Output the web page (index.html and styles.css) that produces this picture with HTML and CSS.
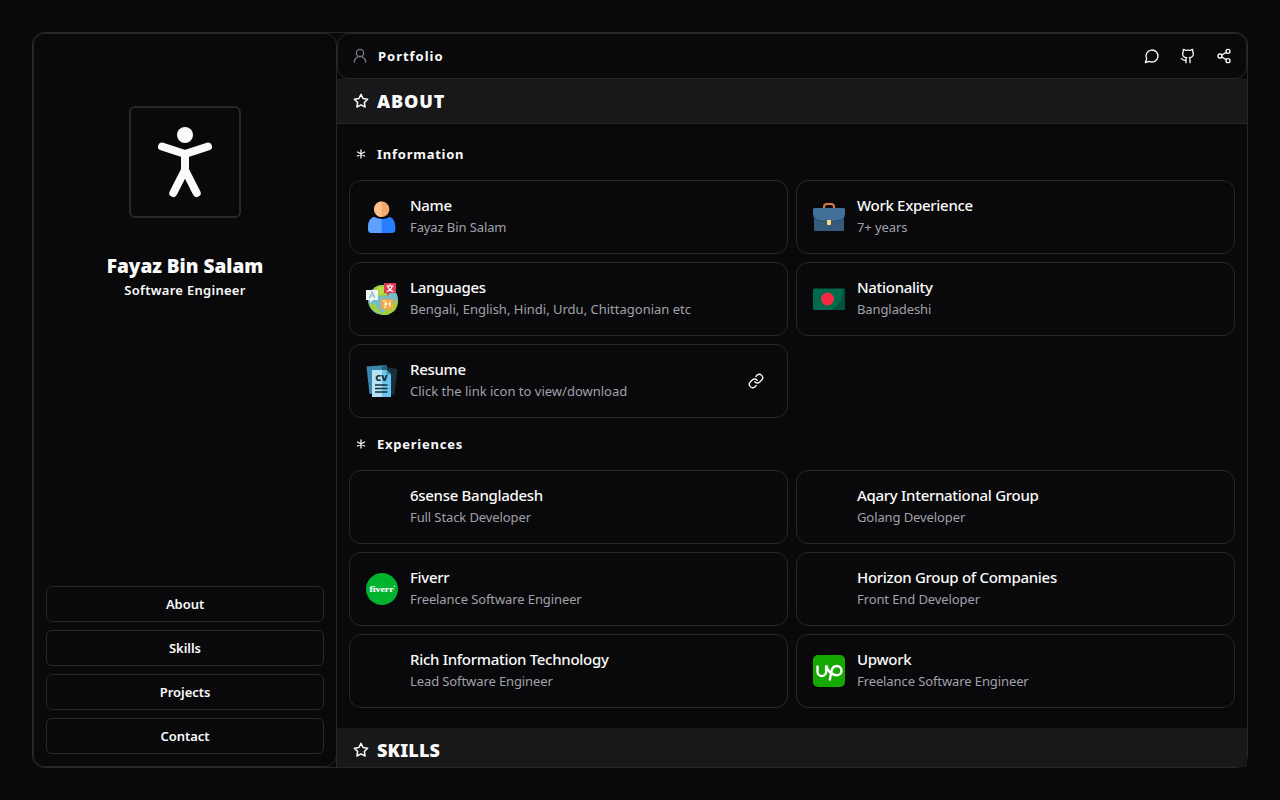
FILE: index.html
```html
<!DOCTYPE html>
<html lang="en">
<head>
<meta charset="utf-8">
<title>Portfolio</title>
<link rel="stylesheet" href="styles.css">
</head>
<body>
<div class="shell">
  <aside class="sidebar">
    <div class="profile">
      <div class="avatar">
        <svg width="108" height="108" viewBox="2 2 108 108"><circle cx="56" cy="29" r="8" fill="#fafafa"/><path d="M33 40.5 56 48 79 40.5M56 48V65M44.3 87 56 64 67.7 87" fill="none" stroke="#fafafa" stroke-width="8" stroke-linecap="round" stroke-linejoin="round"/></svg>
      </div>
      <h1 class="name">Fayaz Bin Salam</h1>
      <p class="role">Software Engineer</p>
    </div>
    <nav class="nav">
      <a class="nav-link">About</a>
      <a class="nav-link">Skills</a>
      <a class="nav-link">Projects</a>
      <a class="nav-link">Contact</a>
    </nav>
  </aside>
  <main class="main">
    <header class="topbar">
      <svg class="icon user" width="16" height="16" viewBox="0 0 24 24"><circle cx="12" cy="7.500" r="5.500"/><path d="M20.500 21a8.500 8.500 0 0 0-17 0"/></svg>
      <span class="brand">Portfolio</span>
      <div class="actions">
        <svg class="icon" width="16" height="16" viewBox="0 0 24 24"><path d="M7.9 20A9 9 0 1 0 4 16.1L2 22Z"/></svg>
        <svg class="icon" width="16" height="16" viewBox="0 0 24 24"><path d="M15 22v-4a4.800 4.800 0 0 0-1-3.500c3 0 6-2 6-5.500.08-1.250-.27-2.480-1-3.500.28-1.150.28-2.350 0-3.500 0 0-1 0-3 1.500-2.640-.5-5.360-.5-8 0C6 2 5 2 5 2c-.3 1.150-.3 2.350 0 3.500A5.403 5.403 0 0 0 4 9c0 3.500 3 5.500 6 5.500-.39.490-.68 1.050-.85 1.650-.17.6-.22 1.230-.15 1.850v4M9 18c-4.510 2-5-2-7-2"/></svg>
        <svg class="icon" width="16" height="16" viewBox="0 0 24 24"><circle cx="18" cy="5" r="3"/><circle cx="6" cy="12" r="3"/><circle cx="18" cy="19" r="3"/><path d="m8.590 13.510 6.830 3.980M15.410 6.510l-6.820 3.980"/></svg>
      </div>
    </header>
    <div class="scroll">
      <div class="section-bar">
        <svg class="icon star" width="16" height="16" viewBox="0 0 24 24"><path d="m12 2 3.090 6.260L22 9.270l-5 4.870 1.180 6.880L12 17.770l-6.180 3.250L7 14.140 2 9.270l6.910-1.010z"/></svg>
        <h2 class="section-title">ABOUT</h2>
      </div>
      <div class="content">
        <div class="group-head"><svg class="icon asterisk" width="12" height="12" viewBox="0 0 24 24"><path d="M12 4v16M5 8l14 8M19 8 5 16"/></svg><h3 class="group-title">Information</h3></div>
        <div class="grid">
          <article class="card">
            <svg class="logo" width="32" height="32" viewBox="0 0 32 32"><circle cx="15.700" cy="8.200" r="7.700" fill="#f3aa6c"/><path d="M15.700 .5a7.700 7.700 0 0 0 0 15.400z" fill="#ffc18c"/><path d="M8 16q7.700 4 15.600 0c4 1 6 5 5.800 12.500q-.2 3.500-4 3.500H6q-3.700 0-4-3.500c-.2-7.500 2-11.500 6-12.500z" fill="#267fff"/><path d="M8 16q3.800 2 7.700 2V32H6q-3.700 0-4-3.500c-.2-7.500 2-11.500 6-12.500z" fill="#60a1ff"/></svg>
            <div class="copy"><h4 class="title">Name</h4><p class="desc">Fayaz Bin Salam</p></div>
          </article>
          <article class="card">
            <svg class="logo" width="32" height="32" viewBox="0 0 32 32"><path d="M11 8V6q0-3 3-3h4q3 0 3 3v2" fill="none" stroke="#df7849" stroke-width="2"/><path d="M1 16h30v12.500q0 1.500-1.500 1.500h-27Q1 30 1 28.500z" fill="#365b7d"/><path d="M1.500 7h29Q32 7 32 8.500v5q-1 5-8 6-8 1.500-16 0-7-1-8-6v-5Q0 7 1.500 7z" fill="#426f98"/><path d="M0 14q1 5 8 6 8 1.500 16 0 7-1 8-6" fill="none" stroke="#2c4b68"/><rect x="14" y="19" width="4" height="5" rx="1" fill="#ffdb75"/></svg>
            <div class="copy"><h4 class="title">Work Experience</h4><p class="desc">7+ years</p></div>
          </article>
          <article class="card">
            <svg class="logo" width="32" height="32" viewBox="0 0 32 32"><circle cx="17" cy="17" r="15" fill="#72bdc7"/><path d="M8 5q6-5 13-2l2 6-5 5-7-3-4 5zM3 20l7 2 5 9Q5 29 3 20zM14 31l8-5 9.500-10q2 11-9 15.500-5 1.500-8.500-.5z" fill="#a5cd39"/><path d="M12 4h8l-2 6-5 3z" fill="#bbdc48"/><path d="M0 7h12v10H7l-3 3v-3H0z" fill="#f2f3f2"/><path d="m3.500 15 2.700-6 2.700 6M4.500 13h3.500" fill="none" stroke="#87c2c6" stroke-width="1.200"/><path d="M18 0h12v10h-6l-3 3v-3h-3z" fill="#dd3b51"/><path d="M20.500 3h7M24 1.300V3M22 3.500q1 4 5.500 5M26 3.500q-1 4-5.500 5" fill="none" stroke="#fff" stroke-width="1.200"/><path d="M15 16h12v10h-6l-3 2v-2h-3z" fill="#f7a547"/><path d="M17 18h2q3 3-1 3 4 1 0 4M20 21h5M24 18v6" fill="none" stroke="#fff3cc" stroke-width="1.200"/></svg>
            <div class="copy"><h4 class="title">Languages</h4><p class="desc long">Bengali, English, Hindi, Urdu, Chittagonian etc</p></div>
          </article>
          <article class="card">
            <svg class="logo" width="32" height="32" viewBox="0 0 32 32"><rect y="5.500" width="32" height="21.500" rx="1.500" fill="#006a4e"/><path d="M32 7v18.500q0 1.500-1.500 1.500H18q11-5 12-21.500 2 0 2 1.500z" fill="#00513d"/><circle cx="14.500" cy="16" r="6.500" fill="#f42a41"/></svg>
            <div class="copy"><h4 class="title">Nationality</h4><p class="desc">Bangladeshi</p></div>
          </article>
          <article class="card">
            <svg class="logo" width="32" height="32" viewBox="0 0 32 32"><path d="m20 2 11.500 2-3 26-14-2z" fill="#17303b"/><path d="m.5 1.500 20-1.500 1 27-18 2z" fill="#3889b0"/><path d="M16 .3 20.500 0l.3 6H16z" fill="#28617c"/><path d="M6 5h14.500l4.500 4.500V32H6z" fill="#b5e2f4"/><path d="M16 5h4.500l4.500 4.500V32h-9z" fill="#6bc6ee"/><path d="M20.500 5 25 9.500h-4.500z" fill="#438bab"/><path d="M9 20h12.500M9 23.500h12.500M9 27h12.500" stroke="#17303b" stroke-width="1.500"/><text class="cv" x="15.400" y="15.800" textLength="12.500" lengthAdjust="spacingAndGlyphs">CV</text></svg>
            <div class="copy"><h4 class="title">Resume</h4><p class="desc long">Click the link icon to view/download</p></div>
            <svg class="icon link" width="16" height="16" viewBox="0 0 24 24"><path d="M10 13a5 5 0 0 0 7.540.54l3-3a5 5 0 0 0-7.070-7.070l-1.720 1.710M14 11a5 5 0 0 0-7.540-.54l-3 3a5 5 0 0 0 7.070 7.070l1.710-1.710"/></svg>
          </article>
        </div>
        <div class="group-head"><svg class="icon asterisk" width="12" height="12" viewBox="0 0 24 24"><path d="M12 4v16M5 8l14 8M19 8 5 16"/></svg><h3 class="group-title">Experiences</h3></div>
        <div class="grid">
          <article class="card"><div class="logo"></div><div class="copy"><h4 class="title">6sense Bangladesh</h4><p class="desc">Full Stack Developer</p></div></article>
          <article class="card"><div class="logo"></div><div class="copy"><h4 class="title">Aqary International Group</h4><p class="desc">Golang Developer</p></div></article>
          <article class="card">
            <svg class="logo" width="32" height="32" viewBox="0 0 32 32"><circle cx="16" cy="16" r="16" fill="#00b22d"/><text class="fiverr" x="15.500" y="19" textLength="24" lengthAdjust="spacingAndGlyphs">fiverr</text><circle cx="28.400" cy="13.300" r=".7" fill="#fff"/></svg>
            <div class="copy"><h4 class="title">Fiverr</h4><p class="desc">Freelance Software Engineer</p></div>
          </article>
          <article class="card"><div class="logo"></div><div class="copy"><h4 class="title">Horizon Group of Companies</h4><p class="desc">Front End Developer</p></div></article>
          <article class="card"><div class="logo"></div><div class="copy"><h4 class="title">Rich Information Technology</h4><p class="desc">Lead Software Engineer</p></div></article>
          <article class="card">
            <svg class="logo" width="32" height="32" viewBox="0 0 32 32"><rect width="32" height="32" rx="5" fill="#14a800"/><path d="M4.500 10.500v6.200a4.300 4.300 0 0 0 8.600 0v-6.200q2.200 6 5.500 8.500M16.700 25.500l1.700-9q1-5.500 5.400-5.500a4.500 4.500 0 0 1 0 9.300q-3 0-5.500-2.300" fill="none" stroke="#fff" stroke-width="2.400"/></svg>
            <div class="copy"><h4 class="title">Upwork</h4><p class="desc">Freelance Software Engineer</p></div>
          </article>
        </div>
      </div>
      <div class="section-bar">
        <svg class="icon star" width="16" height="16" viewBox="0 0 24 24"><path d="m12 2 3.090 6.260L22 9.270l-5 4.870 1.180 6.880L12 17.770l-6.180 3.250L7 14.140 2 9.270l6.910-1.010z"/></svg>
        <h2 class="section-title narrow">SKILLS</h2>
      </div>
    </div>
  </main>
</div>
</body>
</html>
```
FILE: styles.css
```css
* { box-sizing: border-box; margin: 0; padding: 0; }
body { height: 800px; padding: 32px; overflow: hidden; background: #09090b; color: #fafafa; font-family: "Noto Sans", sans-serif; }
.shell { display: flex; height: 736px; border: 1px solid #27272a; border-radius: 12px; }
.sidebar { display: flex; flex-direction: column; justify-content: space-between; width: 304px; padding: 12px; border: 1px solid #27272a; border-radius: 12px; }
.profile { display: flex; flex-direction: column; align-items: center; padding-top: 60px; }
.avatar { width: 112px; height: 112px; border: 2px solid #27272a; border-radius: 6px; }
.avatar svg { display: block; }
.name { margin-top: 34px; font-size: 19px; line-height: 28px; font-weight: 900; letter-spacing: 0; }
.role { font-size: 13px; line-height: 20px; font-weight: 600; letter-spacing: .28px; }
.nav { display: flex; flex-direction: column; gap: 8px; }
.nav-link { display: flex; align-items: center; justify-content: center; height: 36px; border: 1px solid #27272a; border-radius: 6px; font-size: 13px; font-weight: 600; letter-spacing: -.05px; }
.main { display: flex; flex-direction: column; flex: 1; min-width: 0; }
.topbar { display: flex; flex: none; align-items: center; height: 46px; padding: 0 14px; border: 1px solid #27272a; border-radius: 12px; }
.icon { flex: none; fill: none; stroke: #fafafa; stroke-width: 2; stroke-linecap: round; stroke-linejoin: round; }
.star { stroke-width: 2.3; }
.asterisk { stroke-width: 2.6; }
.user { stroke: #7b7b80; }
.brand { margin-left: 10px; font-size: 13px; font-weight: 700; letter-spacing: .98px; }
.actions { display: flex; gap: 20px; margin-left: auto; }
.scroll { flex: 1; min-height: 0; overflow: hidden; box-shadow: -1px 0 #27272a; }
.section-bar { display: flex; align-items: center; gap: 8px; height: 45px; padding: 0 16px; border-bottom: 1px solid #27272a; background: #18181b; }
.section-title { font-size: 18px; font-weight: 900; letter-spacing: .9px; line-height: 28px; }
.narrow { letter-spacing: .2px; }
.content { padding: 12px 12px 20px; }
.group-head { display: flex; align-items: center; height: 36px; margin-bottom: 8px; padding-left: 6px; gap: 10px; }
.group-title { font-size: 13px; font-weight: 700; letter-spacing: .75px; }
.grid { display: grid; grid-template-columns: 1fr 1fr; gap: 8px; }
.grid + .group-head { margin-top: 8px; }
.card { display: flex; align-items: center; height: 74px; padding: 0 16px; border: 1px solid #27272a; border-radius: 12px; }
.logo { flex: none; width: 32px; height: 32px; }
.copy { flex: 1; margin-left: 12px; padding-bottom: 4px; }
.title { font-size: 15px; line-height: 24px; font-weight: 500; letter-spacing: -.3px; }
.desc { font-size: 13px; line-height: 20px; letter-spacing: -.1px; color: #a1a1aa; }
.long { letter-spacing: 0; }
.link { margin-right: 7px; }
.cv { font: 900 8px "Noto Sans", sans-serif; text-anchor: middle; fill: #17303b; }
.fiverr { font: bold 9px "Liberation Serif", serif; text-anchor: middle; fill: #fff; stroke: #fff; stroke-width: .15px; }
```
